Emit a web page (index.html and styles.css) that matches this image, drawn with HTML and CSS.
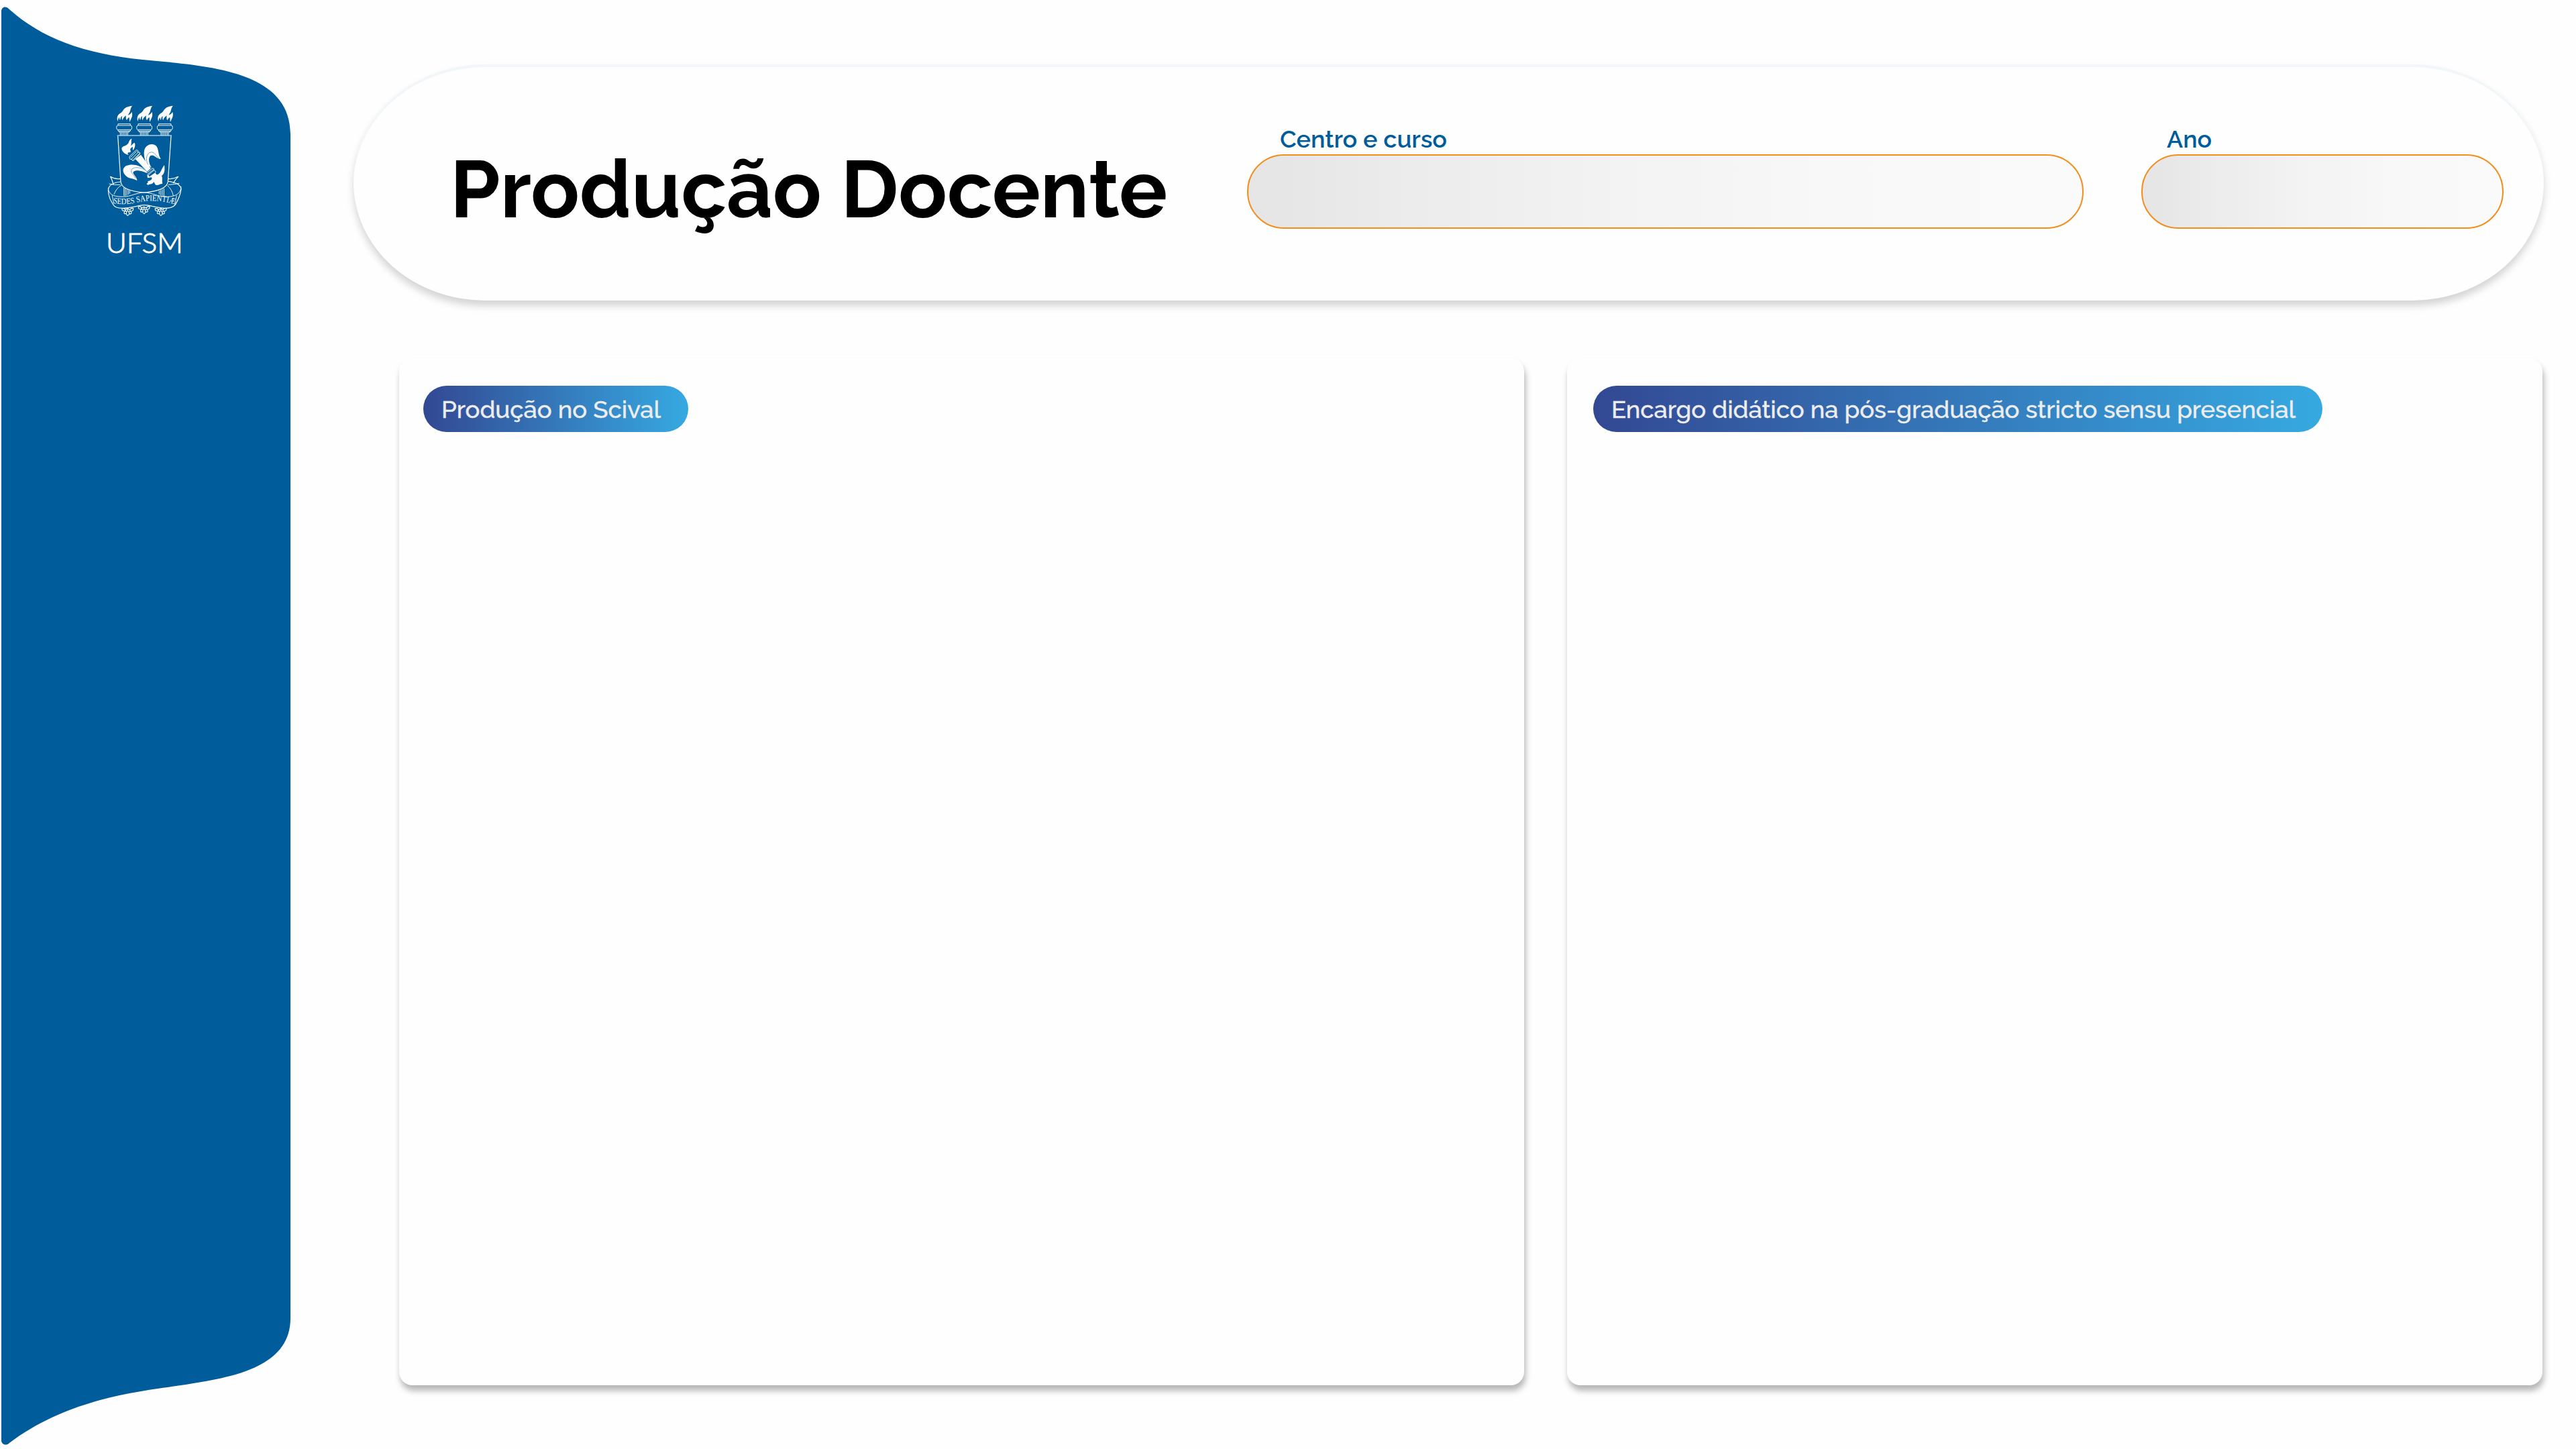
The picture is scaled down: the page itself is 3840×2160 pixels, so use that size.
FILE: index.html
```html
<!DOCTYPE html>
<html lang="pt-BR">
<head>
<meta charset="utf-8">
<title>Produção Docente</title>
<link rel="stylesheet" href="styles.css">
</head>
<body>
<div class="page">
  <aside class="sidebar">
    <svg class="sidebar-art" viewBox="0 0 440 2160" width="440" height="2160">
      <path class="sidebar-shape" d="M2 17C2 10 9 8 14 14C62 57 125 80 213 89C305 98 433 103 433 200V1965C433 2039 345 2053 277 2064C210 2074 105 2083 14 2151C9 2156 2 2153 2 2147Z"/>
      <g class="crest" transform="translate(140 140) scale(.33333)">
        <defs>
          <g id="torch">
            <path class="solid" d="M106 123C102 109 104 101 108 95C113 87 123 86 128 77C135 66 142 56 172 53C163 61 164 75 159 83L152 95C160 93 166 88 169 80C174 92 171 103 166 112L160 125C157 117 160 109 157 104C151 110 148 113 147 118C141 111 144 104 143 97C136 104 130 108 128 118C123 111 126 105 125 99C118 104 120 111 117 117C113 112 114 107 114 104C109 109 108 116 106 123Z"/>
            <path class="line" d="M108 141V134H163V141M106 141H165Q170 141 170 151Q170 160 164 160H106Q101 160 101 151Q101 141 106 141ZM108 160V166H163V160M113 167V171H158V167M118 172V185M124 172V185M131 172V185M138 172V185M145 172V185M151 172V185"/>
          </g>
          <path id="motto" d="M85 489Q140 498 185 487Q270 465 366 495"/>
        </defs>
        <use href="#torch"/>
        <use href="#torch" x="90"/>
        <use href="#torch" x="182"/>
        <path class="line bold" d="M104 186H348"/>
        <path class="line bold" d="M107 188L120 392Q123 433 225 441Q326 433 331 392L345 188"/>
        <path class="solid" d="M155 273C142 272 125 260 124 244C127 233 139 235 149 226C160 218 153 206 170 200C164 212 171 220 164 232C174 227 176 218 182 219C188 231 180 245 176 252C170 246 177 242 173 237C166 242 162 243 163 252C168 260 160 264 155 261C149 266 152 268 155 273Z"/>
        <path class="line" d="M159 280L188 252Q195 249 198 255L195 261Q207 258 207 267L177 299Q169 299 169 291Q161 297 159 286ZM164 284L191 256M169 291L198 261M175 296L204 266"/>
        <path class="solid" d="M185 291L210 272L254 333L238 347Z"/>
        <path class="solid" d="M242 320C232 310 219 276 226 250C233 226 261 218 277 231C291 243 285 268 299 291C279 290 268 268 253 276C241 286 246 312 258 331Z"/>
        <path class="solid" d="M236 347C221 326 178 307 145 321C124 332 129 354 142 365C158 382 176 375 193 388C193 372 176 362 175 351C180 339 210 341 238 355Z"/>
        <path class="dark-line" d="M242 316C230 294 234 266 254 261C272 257 277 279 290 287M231 342C209 327 181 325 169 337C160 354 183 364 186 378"/>
        <path class="solid" d="M238 362L264 344L281 361C298 360 301 335 315 318C318 340 316 357 303 366C309 380 302 390 307 402C294 401 290 411 276 407L267 392C265 406 249 400 242 408L235 402Q246 395 240 391C255 386 263 382 258 373L240 376Z"/>
        <path class="cutout" d="M237 351L259 332Q272 331 269 341Q279 342 276 352L249 371Q242 370 243 363Q232 361 237 351Z"/>
        <path class="line" d="M238 352L261 333Q271 332 268 342L243 363M243 363Q242 371 250 370L275 353Q279 344 268 342M239 360L267 338"/>
        <path class="line bold" d="M119 379Q94 383 74 370Q83 386 87 406M119 393Q64 399 64 432C66 465 76 478 87 496Q95 512 130 511C164 511 205 497 225 497C253 497 286 512 319 511Q352 512 365 494C376 475 387 456 390 425Q386 397 332 391M331 379Q356 382 377 370Q364 382 355 400"/>
        <path class="line" d="M64 420C66 448 82 459 127 460C166 460 190 441 225 441C260 441 285 461 330 460C371 458 388 443 390 414M82 454L89 490M370 454L362 495M90 449Q102 419 123 409M328 409Q350 428 355 456M68 402Q92 409 118 406M333 406Q360 405 382 400"/>
        <path class="line" d="M134 419V456M140 423V456M147 427V454M154 430V450M160 433V446M292 433V449M299 430V453M306 427V455M313 423V457"/>
        <text class="motto"><textPath href="#motto" textLength="279" lengthAdjust="spacingAndGlyphs">SEDES SAPIENTIÆ</textPath></text>
        <g id="flower">
          <path class="line bold" d="M126 512Q124 525 138 523Q130 539 145 535Q150 553 158 536Q173 539 165 524Q178 524 176 511Q161 512 161 520Q150 507 141 520Q139 510 126 512ZM151 511V522M145 535Q145 525 151 522Q158 526 158 536M138 523L146 526M165 524L157 526"/>
        </g>
        <use href="#flower" x="73" y="-8"/>
        <use href="#flower" x="148"/>
        <text class="wordmark" x="54" y="712" textLength="344" lengthAdjust="spacingAndGlyphs">UFSM</text>
      </g>
    </svg>
  </aside>

  <main class="main">
    <header class="header">
      <h1 class="title"><svg width="1080" height="150"><text x="0" y="112" textLength="1069" lengthAdjust="spacingAndGlyphs">Produção Docente</text></svg></h1>
      <div class="field field-course">
        <div class="label"><svg width="260" height="42"><text x="0" y="32" textLength="249" lengthAdjust="spacingAndGlyphs">Centro e curso</text></svg></div>
        <div class="input"></div>
      </div>
      <div class="field field-year">
        <div class="label"><svg width="90" height="42"><text x="0" y="32" textLength="67" lengthAdjust="spacingAndGlyphs">Ano</text></svg></div>
        <div class="input"></div>
      </div>
    </header>
    <div class="cards">
      <section class="card card-scival">
        <h2 class="pill"><svg width="338" height="69"><text x="0" y="48" textLength="327" lengthAdjust="spacingAndGlyphs">Produção no Scival</text></svg></h2>
      </section>
      <section class="card card-load">
        <h2 class="pill"><svg width="1031" height="69"><text x="0" y="48" textLength="1020" lengthAdjust="spacingAndGlyphs">Encargo didático na pós-graduação stricto sensu presencial</text></svg></h2>
      </section>
    </div>
  </main>
</div>
</body>
</html>
```
FILE: styles.css
```css
* { box-sizing: border-box; }

body {
  margin: 0;
  background: #fefefe;
  font-family: Raleway, Lato, sans-serif;
}

h1, h2 { margin: 0; font-size: inherit; }
svg { display: block; overflow: visible; }

.page {
  display: flex;
  width: 3840px;
  height: 2160px;
  overflow: hidden;
}

/* Sidebar */
.sidebar { flex: 0 0 527px; }
.sidebar-shape { fill: #005c9a; }
.crest .solid { fill: #fefefe; }
.crest .line { fill: none; stroke: #fefefe; stroke-width: 2.8; stroke-linejoin: round; }
.crest .bold { stroke-width: 3.6; }
.crest .dark-line { fill: none; stroke: #005c9a; stroke-width: 1.6; }
.crest .cutout { fill: #005c9a; }
.motto { font: 38px "Liberation Serif", serif; fill: #fefefe; }
.wordmark { font: 300 121px Lato, sans-serif; fill: #fefefe; stroke: #fefefe; stroke-width: 3; }

/* Content column */
.main {
  flex: 0 0 3265px;
  display: flex;
  flex-direction: column;
  padding-top: 96px;
}

.header {
  display: flex;
  align-items: flex-start;
  height: 352px;
  padding-left: 144px;
  border-radius: 196px / 176px;
  background: #fefefe;
  box-shadow: inset 0 4px 1px #f1f6f9, 0 8px 12px rgba(0, 0, 0, .17);
}

.title {
  flex: 0 0 1188px;
  padding-top: 116px;
}
.title text { font-size: 120px; font-weight: 700; fill: #000; }

.field { padding-top: 92px; }
.field-course { width: 1247px; margin-right: 86px; }
.field-year { width: 540px; }
.label { height: 42px; padding-left: 49px; }
.field-year .label { padding-left: 38px; }
.label text { font-size: 35px; font-weight: 600; fill: #005c9a; }
.input {
  height: 110.500px;
  border: 2px solid #f28e1c;
  border-radius: 55px;
  background: linear-gradient(90deg, #e5e5e5, #eee 27%, #f4f4f4 50%, #f8f8f8 70%, #fafafa);
}

/* Panels */
.cards {
  display: flex;
  gap: 64px;
  padding: 86px 2px 0 68px;
}
.card {
  height: 1531px;
  padding-top: 41px;
  border-radius: 20px;
  background: #fefefe;
  box-shadow: 2px 8px 10px rgba(0, 0, 0, .29);
}
.card-scival { width: 1677px; padding-left: 36px; }
.card-load { width: 1454px; padding-left: 39px; }
.pill {
  width: fit-content;
  height: 69px;
  padding: 0 30px 0 27px;
  border-radius: 35px;
  background: linear-gradient(90deg, #334893, #36a9e1);
}
.card-load .pill { padding-right: 29px; }
.pill text {
  font-size: 35px;
  font-weight: 500;
  fill: #ededed;
  stroke: #ededed;
  stroke-width: .4px;
}
```
